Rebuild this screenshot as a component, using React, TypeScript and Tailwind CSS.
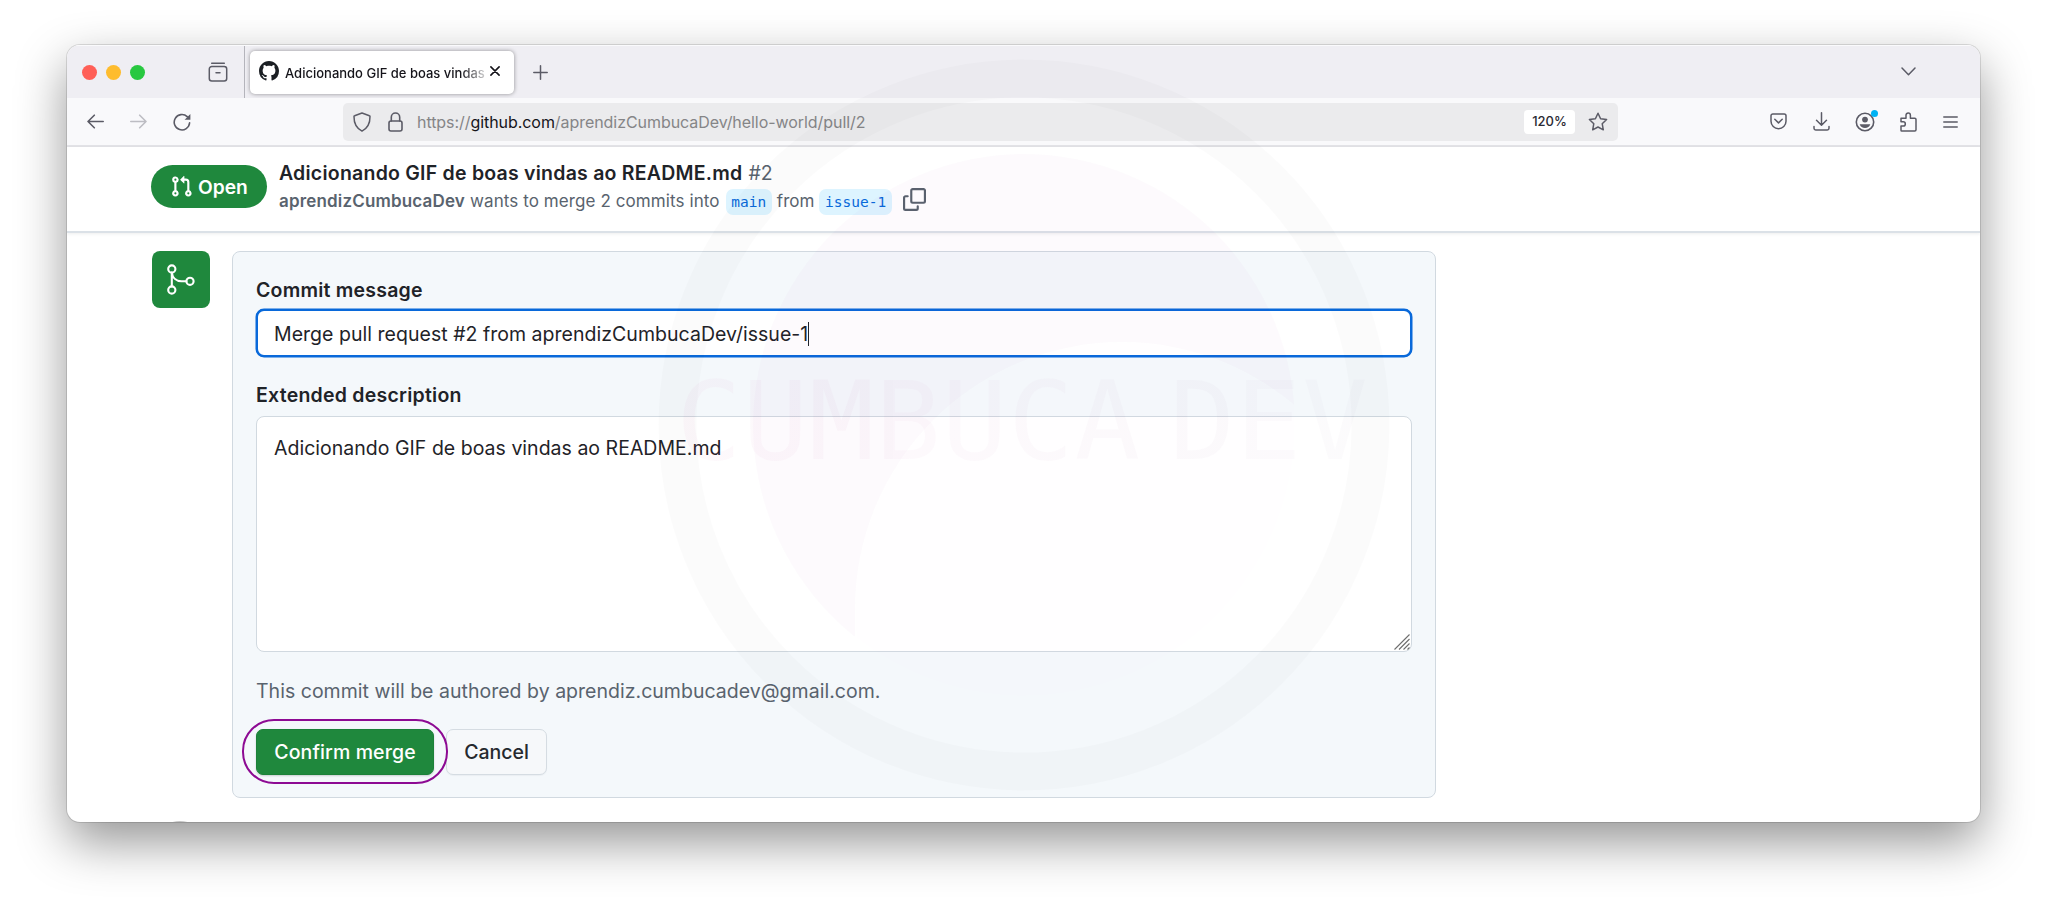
import type { ReactNode } from "react";

function Stroke({ className, box = "0 0 20 20", width = 1.6, children }: { className: string; box?: string; width?: number; children: ReactNode }) {
  return (
    <svg viewBox={box} className={className} fill="none" stroke="currentColor" strokeWidth={width} strokeLinecap="round" strokeLinejoin="round">
      {children}
    </svg>
  );
}

function TabBar() {
  return (
    <div className="flex h-[53px] shrink-0 items-center border-t border-white/70 bg-[#efeef3] pl-[15px] text-[#5b5b66]">
      <div className="flex gap-[9px]">
        <span className="size-[15px] rounded-full bg-[#ff5f57]" />
        <span className="size-[15px] rounded-full bg-[#febc2e]" />
        <span className="size-[15px] rounded-full bg-[#28c840]" />
      </div>
      <Stroke className="ml-[63px] mt-[-1px] size-5" width={1.5}>
        <path d="M3.7 1.2h12.6" />
        <path d="M3.8 4.6h12.4a2.500 2.500 0 0 1 2.500 2.500v9.400a2.500 2.500 0 0 1-2.500 2.500H3.800a2.500 2.500 0 0 1-2.500-2.500V7.100a2.500 2.500 0 0 1 2.500-2.500z" />
        <path d="M8 10.700h4" />
      </Stroke>
      <span className="ml-[16px] h-full w-px bg-[#b4b4bb]" />
      <div className="ml-[5px] flex h-[43px] w-[264px] items-center rounded-[5px] bg-white pl-[9px] text-[#15141a] shadow-[0_0_4px_rgba(0,0,0,0.4)]">
        <svg viewBox="0 0 16 16" className="mt-[-2px] size-5 shrink-0 fill-[#1b1f24]">
          <path d="M8 0c4.420 0 8 3.580 8 8a8.013 8.013 0 0 1-5.450 7.590c-.4.080-.55-.17-.55-.38 0-.27.010-1.130.010-2.200 0-.75-.25-1.230-.54-1.480 1.780-.2 3.650-.88 3.650-3.950 0-.88-.31-1.590-.82-2.150.080-.2.360-1.020-.08-2.120 0 0-.67-.22-2.200.82-.64-.18-1.320-.27-2-.27-.68 0-1.360.090-2 .270-1.530-1.030-2.200-.82-2.200-.82-.44 1.100-.16 1.920-.08 2.120-.51.560-.82 1.280-.82 2.150 0 3.060 1.860 3.750 3.640 3.950-.23.200-.44.550-.51 1.070-.46.210-1.610.550-2.330-.66-.15-.24-.6-.83-1.230-.82-.67.010-.27.380.010.530.340.190.730.900.820 1.130.160.450.680 1.310 2.690.940 0 .670.010 1.300.010 1.490 0 .210-.15.450-.55.380A7.995 7.995 0 0 1 0 8c0-4.420 3.580-8 8-8Z" />
        </svg>
        <span className="ml-[6px] w-[200px] overflow-hidden whitespace-nowrap [mask-image:linear-gradient(to_right,black_88%,transparent_103%)] pt-px text-[13px] font-medium leading-5">
          Adicionando GIF de boas vindas
        </span>
        <Stroke className="ml-[5px] mt-[-2px] size-[10px] shrink-0" box="0 0 10 10" width={1.6}>
          <path d="M.9.9l8.200 8.200M9.100.9L.9 9.100" />
        </Stroke>
      </div>
      <Stroke className="ml-[19px] size-[15px]" box="0 0 15 15" width={1.5}>
        <path d="M7.500.8v13.400M.8 7.500h13.400" />
      </Stroke>
      <Stroke className="ml-auto mr-[64px] mt-[-2px] h-[9px] w-[15px]" box="0 0 15 9" width={1.500}>
        <path d="M1 1l6.500 6.800L14 1" />
      </Stroke>
    </div>
  );
}

function Toolbar() {
  return (
    <div className="flex h-[49px] shrink-0 items-center border-b-2 border-[#e3e3e7] bg-[#f9f9fb] text-[#5b5b66]">
      <Stroke className="ml-[20px] h-[15px] w-[17px]" box="0 0 17 15" width={1.600}>
        <path d="M16.200 7.500H1M7.300 1.200L1 7.500l6.300 6.300" />
      </Stroke>
      <Stroke className="ml-[26px] h-[15px] w-[17px] text-[#bdbdc3]" box="0 0 17 15" width={1.600}>
        <path d="M.8 7.500H16M9.700 1.200L16 7.500l-6.300 6.300" />
      </Stroke>
      <svg viewBox="0 0 18 18" className="ml-[26px] size-[18px]">
        <path d="M16.600 9.800A7.700 7.700 0 1 1 14.200 3.600" fill="none" stroke="currentColor" strokeWidth="1.600" strokeLinecap="round" />
        <path d="M17.400 1v5.800h-5.800z" fill="currentColor" />
      </svg>
      <div className="ml-[152px] flex h-[38px] w-[1275px] items-center rounded-[5px] bg-[#ebebed]">
        <Stroke className="ml-[10px] h-5 w-[18px]" box="0 0 18 20" width={1.500}>
          <path d="M9 1L16.400 3.700a.8.8 0 0 1 .6.800c.1 6.700-2.700 11.900-8 14.600C3.700 16.400.9 11.200 1 4.500a.8.8 0 0 1 .6-.8z" />
        </Stroke>
        <Stroke className="ml-[17px] h-5 w-[15px]" box="0 0 15 20" width={1.600}>
          <rect x="1" y="9" width="13" height="10" rx="2" />
          <path d="M3.300 9V5.200a4.200 4.200 0 0 1 8.400 0V9" />
        </Stroke>
        <span className="ml-[14px] whitespace-nowrap pt-px text-[16px] leading-6 tracking-[-0.06px] text-[#858587]">
          https://<span className="text-[#15141a]">github.com</span>/aprendizCumbucaDev/hello-world/pull/2
        </span>
        <span className="ml-auto flex h-[24px] w-[51px] items-center justify-center rounded-[4px] bg-white pt-px text-[13px] font-medium text-[#2b2a33]">
          120%
        </span>
        <Stroke className="ml-[13px] mr-[10px] h-5 w-5" width={1.500}>
          <path d="M10 1.200l2.600 5.500 6 .8-4.400 4.200 1.100 6.100L10 15l-5.300 2.800 1.100-6.100L1.400 7.500l6-.8z" />
        </Stroke>
      </div>
      <div className="ml-auto flex items-center">
        <Stroke className="h-[17px] w-[17px]" box="0 0 17 17" width={1.500}>
          <path d="M2.800 1h11.400A1.800 1.800 0 0 1 16 2.800v5.400a7.500 7.500 0 0 1-15 0V2.800A1.800 1.800 0 0 1 2.800 1z" />
          <path d="M4.800 6.300l3.700 3.600 3.700-3.600" />
        </Stroke>
        <Stroke className="ml-[26px] h-[19px] w-[17px]" box="0 0 17 19" width={1.500}>
          <path d="M8.500.8v12.200M3.500 8.200l5 5 5-5M1 14.500v1.800A1.700 1.700 0 0 0 2.700 18h11.600a1.700 1.700 0 0 0 1.700-1.700v-1.800" />
        </Stroke>
        <span className="relative ml-[25px]">
          <svg viewBox="0 0 20 20" className="size-5">
            <circle cx="10" cy="10" r="8.700" fill="none" stroke="currentColor" strokeWidth="1.600" />
            <circle cx="10" cy="7.600" r="2.900" fill="currentColor" />
            <path d="M4.700 12.300h10.600a5.600 5.600 0 0 1-10.600 0z" fill="currentColor" />
          </svg>
          <span className="absolute left-[15.500px] top-[-2px] size-[7px] rounded-full bg-[#00b3f4]" />
        </span>
        <Stroke className="ml-[25px] h-5 w-[17px]" box="0 0 17 20" width={1.500}>
          <path d="M1 18.200V14h2.200a2.100 2.100 0 0 0 0-4.200H1V6.300h5V3.200a2.200 2.200 0 0 1 4.400 0v3.100h4.400A1.200 1.200 0 0 1 16 7.500v10.300a1.200 1.200 0 0 1-1.200 1.200H1.800a.8.8 0 0 1-.8-.8z" />
        </Stroke>
        <Stroke className="ml-[26px] mr-[22px] h-[12px] w-[15px]" box="0 0 15 12" width={1.500}>
          <path d="M.8 1h13.400M.8 6h13.400M.8 11h13.400" />
        </Stroke>
      </div>
    </div>
  );
}

function Branch({ children }: { children: string }) {
  return (
    <span className="flex h-[26px] items-center rounded-[7px] bg-[#ddf4ff] px-[5.7px] pt-px font-['DejaVu_Sans_Mono',monospace] text-[14.5px] text-[#0969da]">
      {children}
    </span>
  );
}

function PullHeader() {
  return (
    <div className="flex h-[86px] shrink-0 border-b-2 border-[#dbe1e7] bg-white pl-[84px] shadow-[0_1px_3px_rgba(31,35,40,0.08)]">
      <div className="mt-[18px] flex h-[43px] w-[116px] items-center rounded-full bg-[#1f883d] pl-[19px] text-white">
        <svg viewBox="0 0 16 16" className="size-[23px] fill-white">
          <path d="M1.500 3.250a2.250 2.250 0 1 1 3 2.122v5.256a2.251 2.251 0 1 1-1.500 0V5.372A2.250 2.250 0 0 1 1.500 3.250Zm5.677-.177L9.573.677A.25.250 0 0 1 10 .854V2.500h1A2.500 2.500 0 0 1 13.500 5v5.628a2.251 2.251 0 1 1-1.500 0V5a1 1 0 0 0-1-1h-1v1.646a.25.250 0 0 1-.427.177L7.177 3.427a.25.250 0 0 1 0-.354ZM3.750 2.500a.75.750 0 1 0 0 1.500.75.750 0 0 0 0-1.500Zm0 9.500a.75.750 0 1 0 0 1.500.75.750 0 0 0 0-1.500Zm8.250.75a.75.750 0 1 0 1.500 0 .75.750 0 0 0-1.500 0Z" />
        </svg>
        <span className="ml-[5px] text-[19.2px] font-semibold leading-7">Open</span>
      </div>
      <div className="ml-[12px] mt-[13px] whitespace-nowrap text-[#59636e]">
        <div className="flex h-7 items-center text-[19.5px]">
          <span className="font-semibold tracking-[0.23px] text-[#1f2328]">Adicionando GIF de boas vindas ao README.md</span>
          <span className="ml-[6px]">#2</span>
        </div>
        <div className="flex h-7 items-center text-[17px]">
          <span className="font-semibold tracking-[0.17px]">aprendizCumbucaDev</span>
          <span className="ml-[5px] mr-[6px] tracking-[0.09px]">wants to merge 2 commits into</span>
          <Branch>main</Branch>
          <span className="mx-[5px]">from</span>
          <Branch>issue-1</Branch>
          <svg viewBox="0 0 16 16" className="ml-[11px] mt-[-5px] size-[23px] fill-current">
            <path d="M0 6.750C0 5.784.784 5 1.750 5h1.500a.75.750 0 0 1 0 1.500h-1.500a.25.250 0 0 0-.25.250v7.500c0 .138.112.25.250.25h7.500a.25.250 0 0 0 .25-.25v-1.500a.75.750 0 0 1 1.500 0v1.500A1.750 1.750 0 0 1 9.250 16h-7.500A1.750 1.750 0 0 1 0 14.250Z" />
            <path d="M5 1.750C5 .784 5.784 0 6.750 0h7.500C15.216 0 16 .784 16 1.750v7.500A1.750 1.750 0 0 1 14.250 11h-7.500A1.750 1.750 0 0 1 5 9.250Zm1.750-.25a.25.250 0 0 0-.25.250v7.500c0 .138.112.25.250.25h7.500a.25.250 0 0 0 .25-.25v-7.500a.25.250 0 0 0-.25-.25Z" />
          </svg>
        </div>
      </div>
    </div>
  );
}

function MergeForm() {
  return (
    <div className="flex pl-[85px] pt-[18px]">
      <div className="flex h-[57px] w-[58px] shrink-0 justify-center rounded-[8px] bg-[#1f883d] pt-[13px]">
        <Stroke className="h-[31px] w-7 text-white" box="0 0 28 31" width={2.100}>
          <circle cx="4.800" cy="5" r="3.600" />
          <circle cx="4.800" cy="26" r="3.600" />
          <circle cx="23" cy="17.300" r="3.600" />
          <path d="M4.800 8.600v13.800M4.800 8.600c.6 5 4.200 8.700 9.700 8.700h4.900" />
        </Stroke>
      </div>
      <div className="ml-[22px] flex h-[547px] w-[1204px] flex-col rounded-[8px] border border-[#d1d9e0] bg-[#f4f8fb] px-[23px] pt-[24px] text-[19.5px] leading-7 text-[#1f2328]">
        <div className="font-semibold tracking-[0.22px]">Commit message</div>
        <div className="mt-[5px] flex h-12 items-center rounded-[8px] border-2 border-[#0969da] bg-white pl-[16px] pt-px tracking-[0.03px] shadow-[0_0_0_0.5px_#0969da]">
          Merge pull request #2 from aprendizCumbucaDev/issue-1
          <span className="h-6 w-px bg-[#1f2328]" />
        </div>
        <div className="mt-6 font-semibold tracking-[0.24px]">Extended description</div>
        <div className="relative mt-[7px] h-[236px] rounded-[8px] border border-[#d1d9e0] bg-white pl-[17px] pt-[17px] tracking-[0.02px]">
          Adicionando GIF de boas vindas ao README.md
          <svg viewBox="0 0 16 16" className="absolute bottom-[1px] right-[1px] size-4 stroke-[#6e6e6e]" strokeWidth="1.100">
            <path d="M.5 15.500L15.500.5M5 15.500L15.500 5M9.500 15.500l6-6M13.500 15.500l2-2" />
          </svg>
        </div>
        <div className="mt-[25px] tracking-[0.02px] text-[#59636e]">This commit will be authored by aprendiz.cumbucadev@gmail.com.</div>
        <div className="mt-[24px] flex gap-[12px] font-medium">
          <div className="relative flex h-[46px] w-[178px] items-center justify-center rounded-[7px] border border-[#1c8139] bg-[#1f883d] tracking-[0.12px] text-white shadow-[0_1px_2px_rgba(31,35,40,0.2)]">
            Confirm merge
            <span className="absolute left-[-15px] top-[-11px] h-[65px] w-[206px] rounded-[32px] border-2 border-[#8d0a93]" />
          </div>
          <div className="flex h-[46px] w-[101px] items-center justify-center rounded-[7px] border border-[#d5dce2] bg-[#f6f8fa] text-[#25292e] shadow-[0_1px_1px_rgba(31,35,40,0.04)]">
            Cancel
          </div>
        </div>
      </div>
    </div>
  );
}

function Watermark() {
  return (
    <div className="pointer-events-none absolute left-[591px] top-[14px] h-[732px] w-[732px]">
      <svg viewBox="0 0 732 732" className="size-full">
        <defs>
          <clipPath id="disc">
            <circle cx="366" cy="366" r="271" />
          </clipPath>
          <mask id="upper">
            <rect width="732" height="732" fill="white" />
            <circle cx="464" cy="550" r="267" fill="black" />
            <path d="M197 550H732V732H197z" fill="black" />
          </mask>
        </defs>
        <circle cx="366" cy="366" r="346.500" fill="none" stroke="#000" strokeOpacity="0.016" strokeWidth="38" />
        <circle cx="366" cy="366" r="271" fill="#960f96" fillOpacity="0.020" mask="url(#upper)" />
        <circle cx="464" cy="550" r="267" fill="#804080" fillOpacity="0.005" clipPath="url(#disc)" />
      </svg>
      <div className="absolute left-[18px] top-[299px] whitespace-pre bg-gradient-to-r from-[#c01080]/[0.028] to-[#50306a]/[0.02] bg-clip-text font-['DejaVu_Sans_Mono',monospace] text-[109px] leading-[128px] tracking-[0.800px] text-transparent [word-spacing:-38px]">
        CUMBUCA DEV
      </div>
    </div>
  );
}

export default function App() {
  return (
    <div className="h-[911px] w-[2048px] overflow-hidden bg-white pl-[67px] pt-[45px] font-['Inter',sans-serif]">
      <div className="relative flex h-[777px] w-[1913px] flex-col overflow-hidden rounded-[13px] bg-white shadow-[0_0_0_1px_rgba(0,0,0,0.12),0_20px_50px_rgba(0,0,0,0.42)]">
        <TabBar />
        <Toolbar />
        <PullHeader />
        <MergeForm />
        <span className="ml-[85px] mt-[23px] size-[56px] shrink-0 rounded-full bg-[#c4c4c4]" />
        <Watermark />
      </div>
    </div>
  );
}
